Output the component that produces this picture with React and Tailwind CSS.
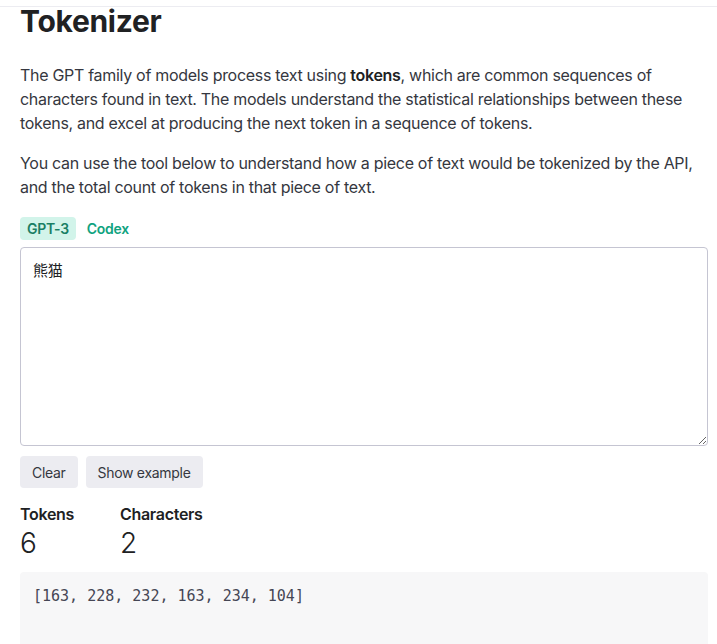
import React, { useState } from 'react';

const App = () => {
  const [text, setText] = useState("熊猫");
  const [tab, setTab] = useState("gpt3");

  return (
    <div className="h-screen overflow-hidden bg-white font-['Inter','Noto_Sans_CJK_SC',sans-serif] text-[#353740] tracking-[-0.3px]">
      {/* top bar edge */}
      <div className="h-[7px] border-b border-[#ececf1]" />

      <div className="pl-5 pr-[9px]">
        <h1 className="-mt-[4px] text-[30px] leading-[36px] font-bold tracking-[-0.3px] text-[#202123]">
          Tokenizer
        </h1>

        <p className="mt-6 text-[16px] leading-[24px]">
          The GPT family of models process text using <b className="font-semibold text-[#202123]">tokens</b>, which are common sequences of characters found in text. The models understand the statistical relationships between these tokens, and excel at producing the next token in a sequence of tokens.
        </p>
        <p className="mt-4 text-[16px] leading-[24px]">
          You can use the tool below to understand how a piece of text would be tokenized by the API, and the total count of tokens in that piece of text.
        </p>

        {/* model tabs */}
        <div className="mt-[18px] flex items-center gap-1">
          <button
            onClick={() => setTab("gpt3")}
            className={`h-[23px] px-[7px] rounded-[4px] text-[14px] font-semibold ${tab === "gpt3" ? "bg-[#d2f4ea] text-[#1a7f64]" : "text-[#10a37f]"}`}
          >
            GPT-3
          </button>
          <button
            onClick={() => setTab("codex")}
            className={`h-[23px] px-[7px] rounded-[4px] text-[14px] font-semibold ${tab === "codex" ? "bg-[#d2f4ea] text-[#1a7f64]" : "text-[#10a37f]"}`}
          >
            Codex
          </button>
        </div>

        <textarea
          value={text}
          onChange={(e) => setText(e.target.value)}
          className="mt-[7px] block w-full h-[199px] rounded-[4px] border border-[#c5c5d2] px-3 py-3 text-[15px] leading-[22px] text-[#202123] outline-none font-['Inter','Noto_Sans_CJK_SC',sans-serif]"
        />

        <div className="mt-[10px] flex gap-2">
          <button
            onClick={() => setText("")}
            className="h-8 px-3 rounded-[4px] bg-[#ececf1] text-[14px] text-[#353740]"
          >
            Clear
          </button>
          <button className="h-8 px-3 rounded-[4px] bg-[#ececf1] text-[14px] text-[#353740]">
            Show example
          </button>
        </div>

        <div className="mt-[16px] flex">
          <div className="w-[100px]">
            <div className="text-[16px] leading-[20px] font-semibold text-[#202123]">Tokens</div>
            <div className="mt-[2px] text-[28px] leading-[34px] font-light text-[#202123]">6</div>
          </div>
          <div>
            <div className="text-[16px] leading-[20px] font-semibold text-[#202123]">Characters</div>
            <div className="mt-[2px] text-[28px] leading-[34px] font-light text-[#202123]">{[...text].length}</div>
          </div>
        </div>

        <div className="mt-[12px] min-h-[120px] rounded-[4px] bg-[#f7f7f8] px-[13px] py-3 font-['DejaVu_Sans_Mono',monospace] tracking-normal text-[15px] leading-[24px] text-[#454654]">
          [163, 228, 232, 163, 234, 104]
        </div>
      </div>
    </div>
  );
};

export default App;
